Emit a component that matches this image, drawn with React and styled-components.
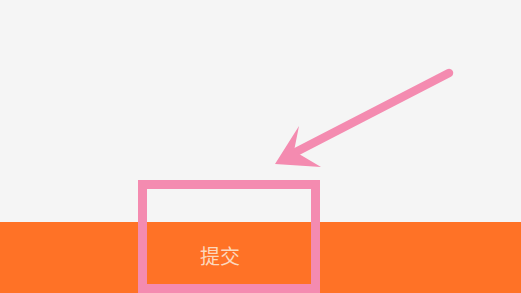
import React from "react";
import styled, { createGlobalStyle } from "styled-components";

const GlobalStyle = createGlobalStyle`
  html, body {
    margin: 0;
    padding: 0;
    background: #f5f5f5;
    font-family: "Noto Sans CJK SC", "Noto Sans", sans-serif;
  }
`;

const Page = styled.div`
  position: relative;
  width: 521px;
  height: 293px;
  overflow: hidden;
  display: flex;
  flex-direction: column;
  background: #f5f5f5;
`;

const Content = styled.div`
  flex: 1;
`;

const BottomBar = styled.div`
  height: 71px;
  display: flex;
  align-items: center;
  background: #ff7226;
`;

const SubmitButton = styled.button`
  width: 440px;
  height: 100%;
  border: none;
  background: transparent;
  color: #fcd8be;
  font-family: "Noto Sans CJK SC", sans-serif;
  font-size: 20px;
  padding: 0 0 5px;
`;

const Highlight = styled.div`
  position: absolute;
  left: 138px;
  top: 180px;
  width: 182px;
  height: 113px;
  box-sizing: border-box;
  border: 9px solid #f48bb0;
`;

const Overlay = styled.svg`
  position: absolute;
  left: 0;
  top: 0;
  pointer-events: none;
`;

const App = () => {
  return (
    <>
      <GlobalStyle />
      <Page>
        <Content />
        <BottomBar>
          <SubmitButton>提交</SubmitButton>
        </BottomBar>
        <Highlight />
        <Overlay width="521" height="293" viewBox="0 0 521 293">
          <line
            x1="449"
            y1="73"
            x2="292"
            y2="154"
            stroke="#f48bb0"
            strokeWidth="8.5"
            strokeLinecap="round"
          />
          <path d="M275 164 L299 126 L294 151 L321 167 Z" fill="#f48bb0" />
        </Overlay>
      </Page>
    </>
  );
};

export default App;
